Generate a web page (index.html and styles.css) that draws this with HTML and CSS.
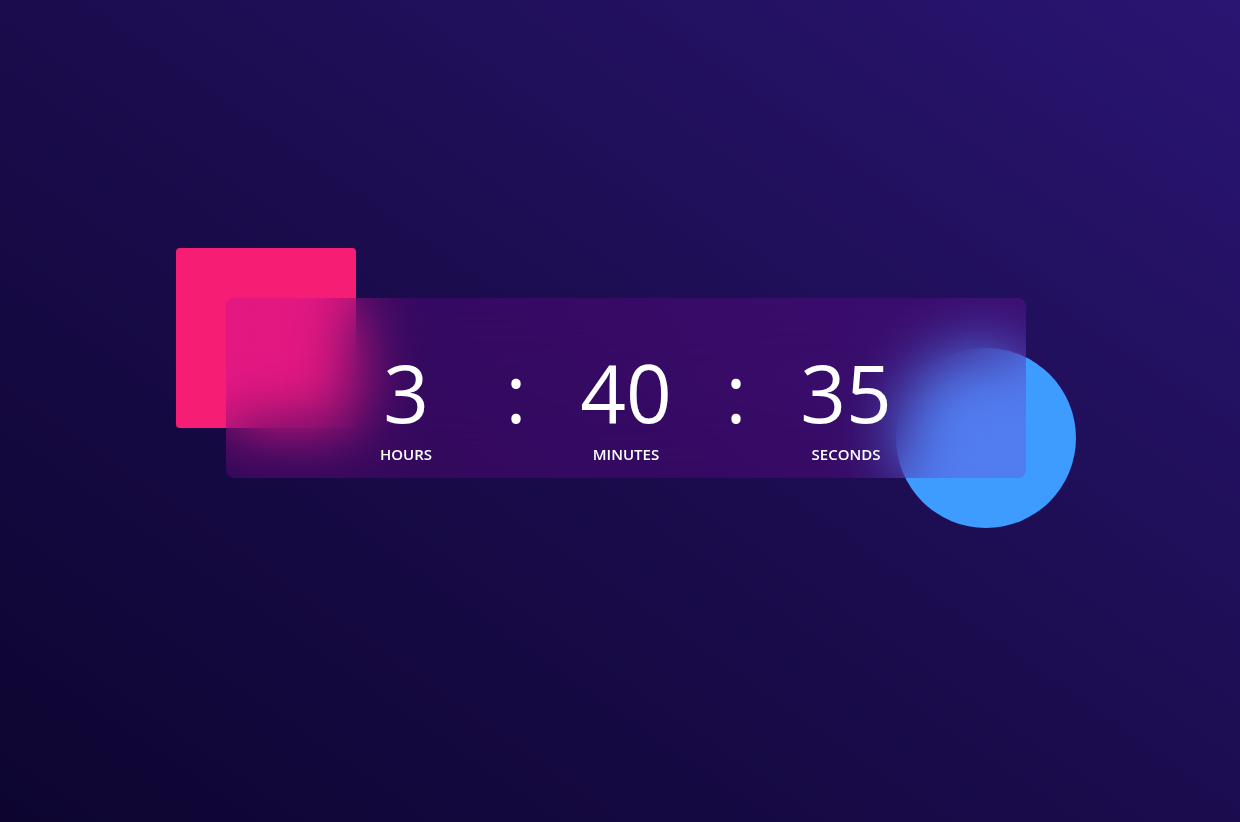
FILE: index.html
```html
<!DOCTYPE html>
<html>
<head>
<meta charset="utf-8">
<link rel="stylesheet" href="styles.css">
</head>
<body>
<div class="stage">
  <div class="shape square"></div>
  <div class="shape circle"></div>
  <div class="card">
    <div class="timer">
      <div class="unit"><div class="num">3</div><div class="label">Hours</div></div>
      <div class="sep">:</div>
      <div class="unit"><div class="num">40</div><div class="label">Minutes</div></div>
      <div class="sep">:</div>
      <div class="unit"><div class="num">35</div><div class="label">Seconds</div></div>
    </div>
  </div>
</div>
</body>
</html>
```
FILE: styles.css
```css
html, body {
  margin: 0;
  height: 100%;
}
body {
  background: linear-gradient(35deg, #0d0530 0%, #1b0c4e 50%, #2a1572 100%);
  font-family: "Open Sans", "Noto Sans", sans-serif;
  color: #fff;
  overflow: hidden;
}
.stage {
  position: relative;
  width: 1240px;
  height: 822px;
}
.shape {
  position: absolute;
}
.square {
  left: 176px;
  top: 248px;
  width: 180px;
  height: 180px;
  border-radius: 4px;
  background: #f51d74;
}
.circle {
  left: 896px;
  top: 348px;
  width: 180px;
  height: 180px;
  border-radius: 50%;
  background: #3e9bff;
}
.card {
  position: absolute;
  left: 226px;
  top: 298px;
  width: 800px;
  height: 180px;
  box-sizing: border-box;
  padding-top: 48px;
  border-radius: 8px;
  background: rgba(162, 7, 186, 0.2);
  backdrop-filter: blur(32px);
  -webkit-backdrop-filter: blur(32px);
  display: flex;
  align-items: flex-start;
  justify-content: center;
}
.timer {
  display: flex;
  align-items: flex-start;
}
.unit {
  width: 140px;
  display: flex;
  flex-direction: column;
  align-items: center;
}
.num {
  font-size: 80px;
  line-height: 92px;
  font-weight: 400;
}
.label {
  font-size: 15px;
  line-height: 20px;
  font-weight: 600;
  text-transform: uppercase;
  margin-top: 6px;
}
.sep {
  width: 80px;
  text-align: center;
  font-size: 80px;
  line-height: 92px;
}
```
